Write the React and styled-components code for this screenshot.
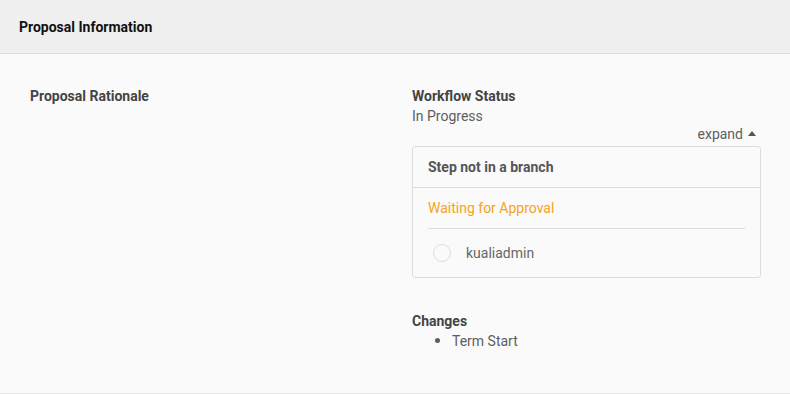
import React from "react";
import styled, { createGlobalStyle } from "styled-components";

const GlobalStyle = createGlobalStyle`
  html, body {
    margin: 0;
    padding: 0;
    background: #fafafa;
    font-family: Roboto, "Liberation Sans", sans-serif;
  }
`;

const Page = styled.div`
  width: 790px;
  height: 394px;
  background: #fafafa;
  box-sizing: border-box;
  border-bottom: 1px solid #e4e4e4;
`;

const Header = styled.div`
  height: 53px;
  background: #efefef;
  border-bottom: 1px solid #dcdcdc;
  display: flex;
  align-items: center;
  padding-left: 19px;
  font-size: 14px;
  font-weight: 700;
  color: #111;
`;

const Body = styled.div`
  display: grid;
  grid-template-columns: 382px 349px;
  padding: 32px 29px 0 30px;
`;

const Label = styled.div`
  font-size: 14px;
  font-weight: 700;
  color: #444;
  line-height: 20px;
`;

const Value = styled.div`
  font-size: 14px;
  color: #5e5e5e;
  line-height: 20px;
`;

const ExpandRow = styled.div`
  display: flex;
  justify-content: flex-end;
  align-items: center;
  gap: 5px;
  padding-right: 5px;
  font-size: 14px;
  color: #5e5e5e;
  line-height: 16px;
`;

const Caret = styled.span`
  width: 0;
  height: 0;
  border-left: 4px solid transparent;
  border-right: 4px solid transparent;
  border-bottom: 5px solid #555;
  margin-bottom: 2px;
`;

const Box = styled.div`
  margin-top: 4px;
  border: 1px solid #dcdcdc;
  border-radius: 3px;
  background: #fafafa;
`;

const BoxHead = styled.div`
  height: 40px;
  display: flex;
  align-items: center;
  padding-left: 15px;
  font-size: 14px;
  font-weight: 700;
  color: #555;
  border-bottom: 1px solid #dcdcdc;
`;

const BoxInner = styled.div`
  padding: 0 15px;
`;

const StepTitle = styled.div`
  height: 40px;
  display: flex;
  align-items: center;
  font-size: 14px;
  color: #f5a31a;
  border-bottom: 1px solid #dcdcdc;
`;

const Person = styled.div`
  height: 48px;
  display: flex;
  align-items: center;
  gap: 15px;
  padding-left: 5px;
  font-size: 14px;
  color: #666;
`;

const Dot = styled.span`
  width: 18px;
  height: 18px;
  border-radius: 50%;
  border: 1px solid #dcdcdc;
  box-sizing: border-box;
`;

const Section = styled.div`
  margin-top: 33px;
`;

const List = styled.ul`
  margin: 0;
  padding-left: 40px;
  font-size: 14px;
  color: #5e5e5e;
  line-height: 20px;

  li::marker {
    font-size: 16px;
  }
`;

export default function App() {
  return (
    <>
      <GlobalStyle />
      <Page>
        <Header>Proposal Information</Header>
        <Body>
          <div>
            <Label>Proposal Rationale</Label>
          </div>
          <div>
            <Label>Workflow Status</Label>
            <Value>In Progress</Value>
            <ExpandRow>
              expand <Caret />
            </ExpandRow>
            <Box>
              <BoxHead>Step not in a branch</BoxHead>
              <BoxInner>
                <StepTitle>Waiting for Approval</StepTitle>
                <Person>
                  <Dot />
                  kualiadmin
                </Person>
              </BoxInner>
            </Box>
            <Section>
              <Label>Changes</Label>
              <List>
                <li>Term Start</li>
              </List>
            </Section>
          </div>
        </Body>
      </Page>
    </>
  );
}
